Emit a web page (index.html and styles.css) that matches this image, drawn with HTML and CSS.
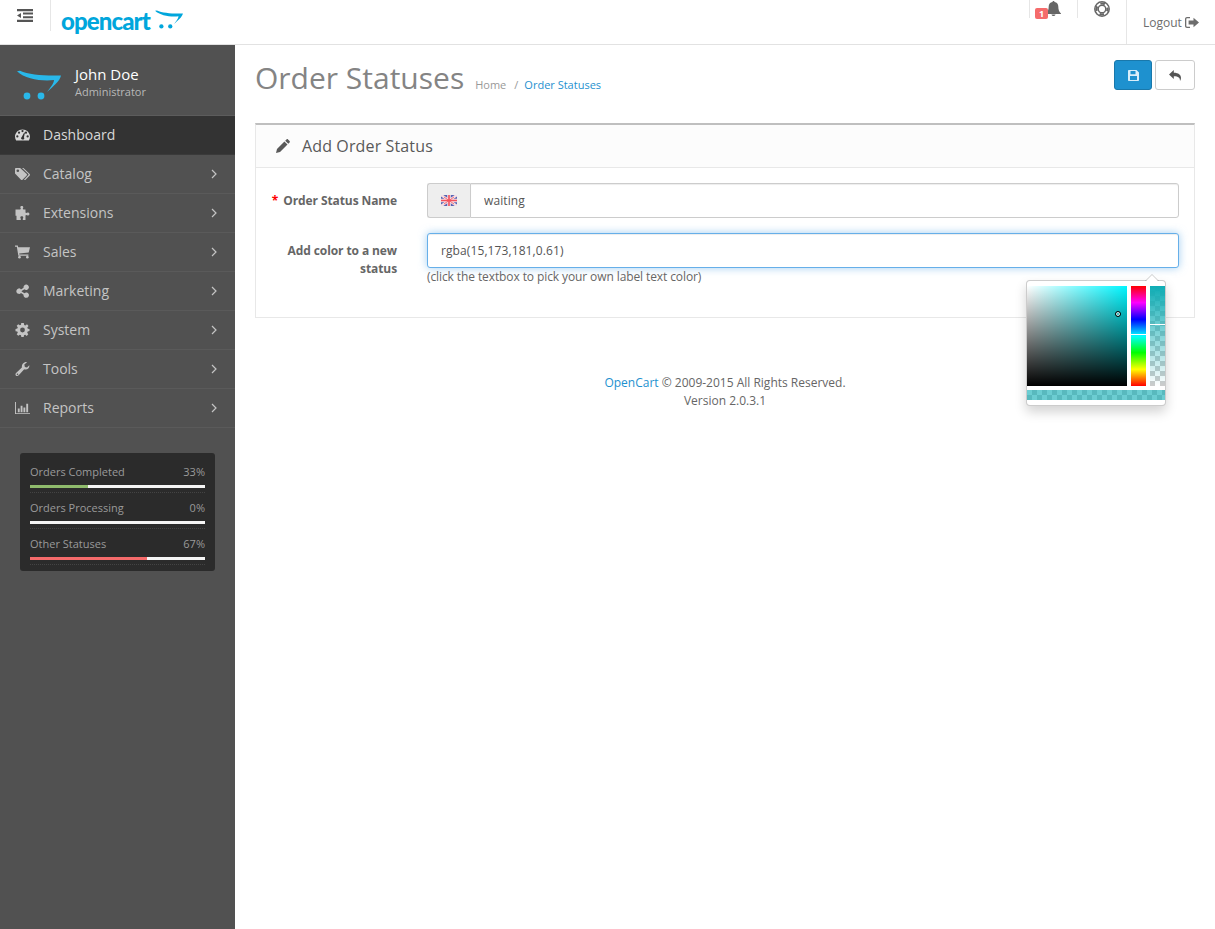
FILE: index.html
```html
<!DOCTYPE html>
<html>

<head>
    <title>Order Statuses</title>
    <link rel="stylesheet" href="styles.css">
</head>

<body>
    <!-- icon sprite -->
    <svg class="sprite" xmlns="http://www.w3.org/2000/svg">
        <symbol id="i-cart-logo" viewBox="0 0 44 30">
            <path d="M0 1.200L3 .8C12 5 28 6 44 5.500C43 11 36 16.500 30 22C33 18 37 13.500 37 10C25 11.500 8 9 0 1.200Z" />
            <circle cx="10" cy="26" r="3.400" />
            <circle cx="24" cy="26" r="3.400" />
        </symbol>
        <symbol id="i-dashboard" viewBox="0 0 16 12">
            <path fill-rule="evenodd" d="M8 0C3.600 0 0 3.400 0 7.700C0 9.200 .4 10.600 1.200 11.800C1.400 12 14.600 12 14.800 11.800C15.600 10.600 16 9.200 16 7.700C16 3.400 12.400 0 8 0ZM2.500 8.700A1.200 1.200 0 1 1 2.500 6.300A1.200 1.200 0 0 1 2.500 8.700ZM4.300 4.700A1.200 1.200 0 1 1 4.300 2.300A1.200 1.200 0 0 1 4.300 4.700ZM8 3A1.200 1.200 0 1 1 8 .6A1.200 1.200 0 0 1 8 3ZM9.500 10.500C8.900 11 7.500 11 6.800 10.200C6.200 9.400 6.500 8.400 7.200 8L9.800 3.200L10.600 3.500L9.500 8.400C10 9 10.100 10 9.500 10.500ZM11.700 4.700A1.200 1.200 0 1 1 11.700 2.300A1.200 1.200 0 0 1 11.700 4.700ZM13.500 8.700A1.200 1.200 0 1 1 13.500 6.300A1.200 1.200 0 0 1 13.500 8.700Z" />
        </symbol>
        <symbol id="i-tags" viewBox="0 0 16 13">
            <path fill-rule="evenodd" d="M0 1C0 .4 .4 0 1 0H5.500L12.500 6.500C13 7 13 7.600 12.500 8.100L8 12.500C7.500 13 6.900 13 6.400 12.500L0 6ZM3 4.400A1.400 1.400 0 1 0 3 1.600A1.400 1.400 0 0 0 3 4.400Z" />
            <path d="M7.500 0H9L15.700 6.500C16.100 7 16.100 7.600 15.700 8.100L11 12.800C10.500 13.100 10 13 9.600 12.600L14.200 7.600C14.500 7.200 14.500 6.800 14.200 6.500Z" />
        </symbol>
        <symbol id="i-puzzle" viewBox="0 0 14 14">
            <path d="M4.800 1.300C4.800 .5 5.500 0 6.300 0C7.100 0 7.800 .5 7.800 1.300C7.800 2 7.300 2.300 7.300 2.800C7.300 3.200 7.600 3.400 8.200 3.400H10V6.300C10 6.800 10.300 7 10.700 7C11.200 7 11.600 6.500 12.300 6.500C13.200 6.500 14 7.100 14 8C14 8.900 13.200 9.500 12.300 9.500C11.600 9.500 11.200 9 10.700 9C10.300 9 10 9.200 10 9.700V14H7.300V12.800C7.300 12.300 7.800 12 7.800 11.400C7.800 10.600 7 10.200 6.300 10.200C5.500 10.200 4.800 10.600 4.800 11.400C4.800 12 5.300 12.300 5.300 12.800V14H1V9.800H0V3.400H4.400C5 3.400 5.300 3.200 5.300 2.800C5.300 2.300 4.800 2 4.800 1.300Z" />
        </symbol>
        <symbol id="i-cart" viewBox="0 0 14 12">
            <path d="M0 0H2.600L3 1.500H14L12.800 6.500L3.900 7.300L4.100 8.300H12.500V9.500H3.100L1.700 1.200H0Z" />
            <circle cx="4.200" cy="10.800" r="1.200" />
            <circle cx="11.500" cy="10.800" r="1.200" />
        </symbol>
        <symbol id="i-share" viewBox="0 0 12 13">
            <path d="M2.500 4A2.500 2.500 0 0 1 4.600 5L7 3.500A2.500 2.500 0 1 1 7.800 4.900L5.200 6.400A2.500 2.500 0 0 1 5.200 7L7.800 8.500A2.500 2.500 0 1 1 7 9.900L4.600 8.400A2.500 2.500 0 1 1 2.500 4.200Z" />
        </symbol>
        <symbol id="i-cog" viewBox="0 0 14 14">
            <path fill-rule="evenodd" d="M5.700 0H8.300L8.700 1.900L9.900 2.400L11.500 1.300L13 3L11.800 4.500L12.300 5.700L14 6V8.100L12.200 8.500L11.700 9.700L12.800 11.300L11.200 12.900L9.700 11.800L8.500 12.200L8.200 14H5.800L5.500 12.200L4.300 11.700L2.800 12.800L1.200 11.200L2.300 9.700L1.800 8.500L0 8.200V5.900L1.800 5.600L2.300 4.400L1.200 2.800L2.800 1.200L4.300 2.300L5.500 1.800ZM7 9.400A2.400 2.400 0 1 0 7 4.600A2.400 2.400 0 0 0 7 9.400Z" />
        </symbol>
        <symbol id="i-wrench" viewBox="0 0 14 14">
            <path fill-rule="evenodd" d="M13.800 3.300C14.300 5.500 12.300 7.800 9.800 7.600C9.300 7.500 9 7.500 8.700 7.300L3.200 13.200C2.300 14.200 .9 14.200 .3 13.400C-.3 12.700 -.1 11.500 .8 10.700L6.400 5.400C6 3.300 7.400 .6 10 .1C10.500 0 11 0 11.500 .2L8.800 2.600L9.400 5L11.500 5.600ZM2 13A.8.8 0 1 0 2 11.400A.8.8 0 0 0 2 13Z" />
        </symbol>
        <symbol id="i-chart" viewBox="0 0 16 13">
            <path d="M0 0H1V12H16V13H0ZM3 7H5V11H3ZM6 4H8V11H6ZM9 6H11V11H9ZM12 2H14V11H12Z" />
        </symbol>
        <symbol id="i-angle" viewBox="0 0 6 10">
            <path d="M1 1L5 5L1 9" fill="none" stroke="currentColor" stroke-width="1.200" />
        </symbol>
        <symbol id="i-bell" viewBox="0 0 15 15">
            <path d="M7.500 0C8.100 0 8.500 .4 8.500 1C11 1.400 12.300 3.400 12.300 5.600C12.300 9 13.300 11 15 12.500V13H0V12.500C1.700 11 2.700 9 2.700 5.600C2.700 3.400 4 1.400 6.500 1C6.500 .4 6.900 0 7.500 0ZM5.500 13.500H9.500C9.500 14.400 8.600 15 7.500 15C6.400 15 5.500 14.400 5.500 13.500Z" />
        </symbol>
        <symbol id="i-ring" viewBox="0 0 16 16">
            <g fill="none" stroke="currentColor">
                <circle cx="8" cy="8" r="7.200" stroke-width="1.500" />
                <circle cx="8" cy="8" r="3.800" stroke-width="1.400" />
                <circle cx="8" cy="8" r="5.500" stroke-width="2.200" stroke-dasharray="4.640 4" stroke-dashoffset="2.320" />
            </g>
        </symbol>
        <symbol id="i-logout" viewBox="0 0 14 11">
            <path d="M5 0V1.300H2.300C1.700 1.300 1.300 1.700 1.300 2.300V8.700C1.300 9.300 1.700 9.700 2.300 9.700H5V11H2C.9 11 0 10.100 0 9V2C0 .9 .9 0 2 0ZM8.500 .7L14 5.500L8.500 10.300V7.500H3.600V3.500H8.500Z" />
        </symbol>
        <symbol id="i-save" viewBox="0 0 11 11">
            <path fill-rule="evenodd" d="M1 0H8.500L11 2.500V10C11 10.600 10.600 11 10 11H1C.4 11 0 10.600 0 10V1C0 .4 .4 0 1 0ZM2.500 1V4.200H7.500V1ZM2 6V10H9V6Z" />
        </symbol>
        <symbol id="i-reply" viewBox="0 0 12 11">
            <path d="M4.800 0V2.700C9.500 2.700 12 4.800 12 8C12 9 11.600 10.200 11 11C11.200 7.800 9.500 6.200 4.800 6.200V9L0 4.500Z" />
        </symbol>
        <symbol id="i-pencil" viewBox="0 0 14 14">
            <path d="M10.500 .4C11 0 11.600 0 12 .4L13.600 2C14 2.400 14 3 13.600 3.500L12.300 4.800L9.200 1.700ZM8.400 2.500L11.500 5.600L4 13L0 14L1 10Z" />
        </symbol>
    </svg>

    <header class="topbar">
        <a class="toggle"><svg width="16" height="13" viewBox="0 0 16 13"><path d="M0 0H16V2.200H0ZM6 3.600H16V5.600H6ZM6 7.200H16V9.200H6ZM0 10.800H16V13H0ZM0 6.500L4 4V9Z" /></svg></a>
        <div class="brand">
            <span class="brand-name">opencart</span>
            <svg class="brand-cart"><use href="#i-cart-logo" /></svg>
        </div>
        <ul class="topnav">
            <li class="topnav-alert"><span class="badge">1</span><svg class="bell"><use href="#i-bell" /></svg></li>
            <li class="topnav-help"><svg class="ring"><use href="#i-ring" /></svg></li>
            <li class="topnav-logout">Logout <svg class="logout"><use href="#i-logout" /></svg></li>
        </ul>
    </header>

    <div class="wrap">
        <aside class="sidebar">
            <div class="profile">
                <svg class="profile-cart"><use href="#i-cart-logo" /></svg>
                <div class="profile-text">
                    <div class="profile-name">John Doe</div>
                    <div class="profile-role">Administrator</div>
                </div>
            </div>

            <ul class="menu">
                <li class="active"><svg class="mi"><use href="#i-dashboard" /></svg>Dashboard</li>
                <li><svg class="mi"><use href="#i-tags" /></svg>Catalog<svg class="arrow"><use href="#i-angle" /></svg></li>
                <li><svg class="mi"><use href="#i-puzzle" /></svg>Extensions<svg class="arrow"><use href="#i-angle" /></svg></li>
                <li><svg class="mi"><use href="#i-cart" /></svg>Sales<svg class="arrow"><use href="#i-angle" /></svg></li>
                <li><svg class="mi"><use href="#i-share" /></svg>Marketing<svg class="arrow"><use href="#i-angle" /></svg></li>
                <li><svg class="mi"><use href="#i-cog" /></svg>System<svg class="arrow"><use href="#i-angle" /></svg></li>
                <li><svg class="mi"><use href="#i-wrench" /></svg>Tools<svg class="arrow"><use href="#i-angle" /></svg></li>
                <li><svg class="mi"><use href="#i-chart" /></svg>Reports<svg class="arrow"><use href="#i-angle" /></svg></li>
            </ul>

            <div class="stats">
                <div class="stat">
                    <div class="stat-top"><span>Orders Completed</span><span>33%</span></div>
                    <div class="bar"><div class="bar-fill green" style="width: 33%"></div></div>
                </div>
                <div class="stat">
                    <div class="stat-top"><span>Orders Processing</span><span>0%</span></div>
                    <div class="bar"><div class="bar-fill" style="width: 0%"></div></div>
                </div>
                <div class="stat">
                    <div class="stat-top"><span>Other Statuses</span><span>67%</span></div>
                    <div class="bar"><div class="bar-fill red" style="width: 67%"></div></div>
                </div>
            </div>
        </aside>

        <main class="content">
            <div class="page-header">
                <h1>Order Statuses</h1>
                <ul class="breadcrumb">
                    <li>Home</li>
                    <li class="sep">/</li>
                    <li class="current">Order Statuses</li>
                </ul>
                <div class="actions">
                    <button class="btn btn-primary"><svg class="save"><use href="#i-save" /></svg></button>
                    <button class="btn"><svg class="reply"><use href="#i-reply" /></svg></button>
                </div>
            </div>

            <section class="panel">
                <div class="panel-heading">
                    <svg class="pencil"><use href="#i-pencil" /></svg>
                    <h3>Add Order Status</h3>
                </div>
                <div class="panel-body">
                    <label class="field-label"><span class="req">*</span> Order Status Name</label>
                    <div class="input-group">
                        <span class="addon">
                            <svg width="16" height="11" viewBox="0 0 16 11">
                                <rect width="16" height="11" fill="#5563b4" />
                                <path d="M0 0L16 11M16 0L0 11" stroke="#f6dfe4" stroke-width="2.600" />
                                <path d="M8 0V11M0 5.500H16" stroke="#f6dfe4" stroke-width="3.600" />
                                <path d="M8 0V11M0 5.500H16" stroke="#f2505c" stroke-width="1.600" />
                                <path d="M3 2L13 9M13 2L3 9" stroke="#f2505c" stroke-width=".8" />
                            </svg>
                        </span>
                        <input class="input" type="text" value="waiting">
                    </div>

                    <label class="field-label">Add color to a new status</label>
                    <div class="color-field">
                        <input class="input input-focus" type="text" value="rgba(15,173,181,0.61)">
                        <div class="help">(click the textbox to pick your own label text color)</div>

                        <div class="colorpicker">
                            <div class="cp-grid">
                                <div class="cp-sat"><i class="cp-cursor"></i></div>
                                <div class="cp-hue"><i class="cp-line hue-line"></i></div>
                                <div class="cp-alpha"><i class="cp-line alpha-line"></i></div>
                            </div>
                            <div class="cp-preview"></div>
                        </div>
                    </div>
                </div>
            </section>

            <footer class="footer">
                <a>OpenCart</a> &copy; 2009-2015 All Rights Reserved.<br>Version 2.0.3.1
            </footer>
        </main>
    </div>
</body>

</html>
```
FILE: styles.css
```css
* {
  box-sizing: border-box;
}

html, body {
  margin: 0;
  height: 100%;
}

body {
  font-family: "Open Sans", sans-serif;
  font-size: 12px;
  color: #666;
  background: #fff;
  overflow: hidden;
}

ul {
  list-style: none;
  margin: 0;
  padding: 0;
}

svg {
  fill: currentColor;
  display: block;
}

.sprite {
  display: none;
}

/* top bar */
.topbar {
  display: flex;
  height: 45px;
  border-bottom: 1px solid #e2e2e2;
  color: #666;
}

.toggle {
  width: 51px;
  height: 31px;
  padding: 9px 0 0 17px;
  border-right: 1px solid #e6e6e6;
  color: #555;
}

.brand {
  display: flex;
  padding-left: 10px;
  color: #00a6dc;
}

.brand-name {
  width: 90px;
  font-family: "Lato", sans-serif;
  font-weight: 900;
  font-size: 24px;
  line-height: 41px;
  letter-spacing: -.9px;
  white-space: nowrap;
}

.brand-cart {
  width: 28px;
  height: 19px;
  margin: 10px 0 0 4px;
}

.topnav {
  display: flex;
  margin-left: auto;
}

.topnav-alert {
  position: relative;
  width: 48px;
  height: 18px;
  border-left: 1px solid #e6e6e6;
  color: #666;
}

.bell {
  width: 15px;
  height: 15px;
  margin: 1px 0 0 16px;
}

.badge {
  position: absolute;
  left: 5px;
  top: 8px;
  width: 13px;
  height: 11px;
  border-radius: 2px;
  background: #f56b6b;
  color: #fff;
  font-size: 9px;
  font-weight: 700;
  line-height: 11px;
  text-align: center;
}

.topnav-help {
  width: 49px;
  height: 18px;
  border-left: 1px solid #e6e6e6;
}

.ring {
  width: 16px;
  height: 16px;
  margin: 1px 0 0 16px;
}

.topnav-logout {
  display: flex;
  align-items: center;
  gap: 3px;
  width: 89px;
  padding: 0 0 0 16px;
  border-left: 1px solid #e6e6e6;
  color: #6d6d6d;
  height: 44px;
}

.logout {
  width: 14px;
  height: 11px;
}

/* sidebar */
.wrap {
  display: flex;
  height: calc(100% - 45px);
}

.sidebar {
  flex: 0 0 235px;
  background: #515151;
  color: #c4c4c4;
}

.profile {
  display: flex;
  align-items: center;
  height: 71px;
  padding-left: 17px;
  border-bottom: 1px solid #5c5c5c;
}

.profile-cart {
  width: 44px;
  height: 30px;
  margin: 9px 14px 0 0;
  color: #29b8ea;
}

.profile-text {
  padding-top: 3px;
}

.profile-name {
  font-size: 15px;
  line-height: 20px;
  margin-bottom: 1px;
  color: #fff;
}

.profile-role {
  font-size: 11px;
  line-height: 14px;
  color: #b8b8b8;
}

.menu li {
  display: flex;
  align-items: center;
  height: 39px;
  border-bottom: 1px solid #5a5a5a;
  font-size: 14px;
  position: relative;
  padding: 0 0 2px 43px;
}

.menu li.active {
  background: #333;
  border-bottom-color: #3a3a3a;
  color: #d8d8d8;
}

.mi {
  position: absolute;
  left: 15px;
  top: 12px;
  width: 15px;
  height: 14px;
}

.arrow {
  width: 6px;
  height: 10px;
  margin: 2px 18px 0 auto;
}

/* stats box */
.stats {
  margin: 25px 20px 0;
  padding: 4px 10px 6px;
  background: #2b2b2b;
  border-radius: 3px;
  font-size: 11px;
  color: #9a9a9a;
}

.stat {
  height: 36px;
  padding-top: 6px;
  border-bottom: 1px dotted #444;
}

.stat-top {
  display: flex;
  justify-content: space-between;
  line-height: 17px;
}

.bar {
  height: 3px;
  margin-top: 5px;
  background: #f5f5f5;
}

.bar-fill {
  height: 3px;
}

.green {
  background: #8fbb6c;
}

.red {
  background: #f56b6b;
}

/* main column */
.content {
  flex: 1;
  padding: 0 20px;
}

.page-header {
  display: flex;
  align-items: flex-start;
  height: 78px;
}

h1 {
  margin: 12px 11px 0 0;
  font-size: 30px;
  font-weight: 400;
  line-height: 42px;
  color: #848484;
}

.breadcrumb {
  display: flex;
  gap: 6px;
  margin-top: 32px;
  font-size: 11px;
  line-height: 16px;
  color: #999;
}

.sep {
  margin-left: 2px;
}

.current {
  color: #1e91cf;
}

.actions {
  display: flex;
  gap: 3px;
  margin: 15px 0 0 auto;
}

.btn {
  display: flex;
  align-items: center;
  justify-content: center;
  width: 40px;
  height: 30px;
  padding: 0;
  background: #fff;
  border: 1px solid #ccc;
  border-radius: 3px;
  color: #555;
}

.btn-primary {
  width: 38px;
  background: #1e91cf;
  border-color: #1978ab;
  color: #d9eefa;
}

.save {
  width: 11px;
  height: 11px;
}

.reply {
  width: 12px;
  height: 11px;
}

.panel {
  border: 1px solid #e8e8e8;
  border-top: 2px solid #bfbfbf;
}

.panel-heading {
  display: flex;
  align-items: center;
  height: 43px;
  padding-left: 20px;
  background: #fcfcfc;
  border-bottom: 1px solid #e8e8e8;
}

.pencil {
  width: 14px;
  height: 14px;
  margin-right: 12px;
  color: #595959;
}

h3 {
  margin: 0;
  font-size: 16px;
  font-weight: 400;
  letter-spacing: .13px;
  color: #595959;
}

.panel-body {
  display: grid;
  grid-template-columns: 126px 1fr;
  column-gap: 30px;
  row-gap: 15px;
  padding: 15px 15px 31px;
}

.field-label {
  padding-top: 9px;
  font-weight: 700;
  line-height: 18px;
  letter-spacing: -.1px;
  text-align: right;
  color: #666;
}

.req {
  margin-right: 2px;
  color: #f00;
}

.input-group {
  display: flex;
}

.addon {
  display: flex;
  align-items: center;
  justify-content: center;
  flex: 0 0 43px;
  background: #eee;
  border: 1px solid #ccc;
  border-right: 0;
  border-radius: 3px 0 0 3px;
}

.input {
  display: block;
  width: 100%;
  height: 35px;
  padding: 0 13px;
  border: 1px solid #ccc;
  border-radius: 3px;
  font: 12px "Open Sans", sans-serif;
  letter-spacing: .1px;
  color: #555;
  box-shadow: inset 0 1px 1px rgba(0, 0, 0, .075);
  outline: 0;
}

.input-group .input {
  border-radius: 0 3px 3px 0;
}

.input-focus {
  border-color: #66afe9;
  box-shadow: inset 0 1px 1px rgba(0, 0, 0, .075), 0 0 8px rgba(102, 175, 233, .6);
}

.color-field {
  position: relative;
}

.help {
  line-height: 18px;
  letter-spacing: -.1px;
  color: #666;
}

/* the open colour picker */
.colorpicker {
  position: absolute;
  top: 47px;
  right: 13px;
  width: 140px;
  padding-top: 5px;
  padding-bottom: 5px;
  background: #fff;
  border: 1px solid rgba(0, 0, 0, .2);
  border-radius: 4px;
  box-shadow: 0 6px 12px rgba(0, 0, 0, .175);
}

.colorpicker:before {
  content: "";
  position: absolute;
  top: -7px;
  right: 6px;
  border-left: 7px solid transparent;
  border-right: 7px solid transparent;
  border-bottom: 7px solid rgba(0, 0, 0, .2);
}

.colorpicker:after {
  content: "";
  position: absolute;
  top: -6px;
  right: 7px;
  border-left: 6px solid transparent;
  border-right: 6px solid transparent;
  border-bottom: 6px solid #fff;
}

.cp-grid {
  display: grid;
  grid-template-columns: 100px 15px 15px;
  column-gap: 4px;
  height: 100px;
}

.cp-sat {
  position: relative;
  background: linear-gradient(to bottom, transparent, #000), linear-gradient(to right, #fff, transparent), #00f6ff;
}

.cp-cursor {
  position: absolute;
  left: 88px;
  top: 25px;
  width: 6px;
  height: 6px;
  border: 1px solid #000;
  border-radius: 50%;
  box-shadow: inset 0 0 0 1px #fff;
}

.cp-hue {
  position: relative;
  background: linear-gradient(to bottom, #f00, #f0f, #00f, #0ff, #0f0, #ff0, #f00);
}

.cp-alpha {
  position: relative;
  background: linear-gradient(to bottom, #0fadb5, rgba(15, 173, 181, 0)), repeating-conic-gradient(#ccc 0 25%, #fff 0 50%) 0 0 / 10px 10px;
}

.cp-line {
  position: absolute;
  left: 0;
  right: 0;
  height: 1px;
  background: #fff;
}

.hue-line {
  top: 48px;
}

.alpha-line {
  top: 38px;
}

.cp-preview {
  height: 10px;
  margin-top: 4px;
  background: linear-gradient(rgba(15, 173, 181, .61), rgba(15, 173, 181, .61)), repeating-conic-gradient(#ccc 0 25%, #fff 0 50%) 0 0 / 10px 10px;
}

.footer {
  margin-top: 56px;
  line-height: 18px;
  text-align: center;
}

.footer a {
  color: #1e91cf;
}
```
